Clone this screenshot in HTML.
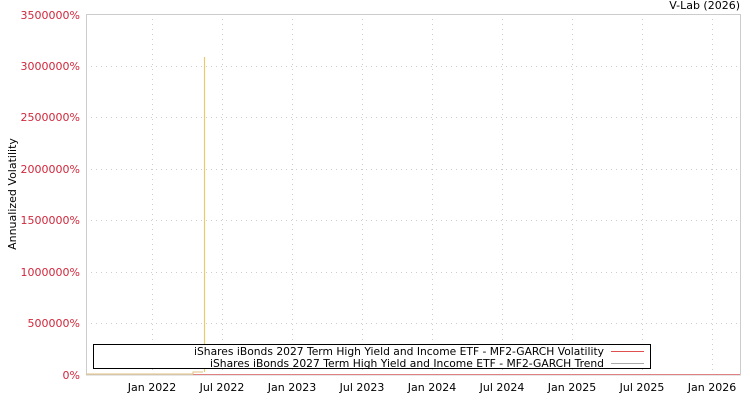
<!DOCTYPE html>
<html><head><meta charset="utf-8"><style>
html,body{margin:0;padding:0;background:#fff;}
svg{display:block;font-family:"DejaVu Sans","Liberation Sans",sans-serif;}
</style></head><body>
<svg width="750" height="400" viewBox="0 0 750 400">
<rect width="750" height="400" fill="#fff"/>
<text x="740" y="9" font-size="11" text-anchor="end" fill="#000">V-Lab (2026)</text>
<g stroke="#ccc" stroke-width="1" stroke-dasharray="1,4">
<line x1="152.5" y1="14" x2="152.5" y2="375"/>
<line x1="222.5" y1="14" x2="222.5" y2="375"/>
<line x1="292.5" y1="14" x2="292.5" y2="375"/>
<line x1="362.5" y1="14" x2="362.5" y2="375"/>
<line x1="432.5" y1="14" x2="432.5" y2="375"/>
<line x1="502.5" y1="14" x2="502.5" y2="375"/>
<line x1="572.5" y1="14" x2="572.5" y2="375"/>
<line x1="642.5" y1="14" x2="642.5" y2="375"/>
<line x1="712.5" y1="14" x2="712.5" y2="375"/>
<line x1="86" y1="66.5" x2="740" y2="66.5"/>
<line x1="86" y1="117.5" x2="740" y2="117.5"/>
<line x1="86" y1="169.5" x2="740" y2="169.5"/>
<line x1="86" y1="220.5" x2="740" y2="220.5"/>
<line x1="86" y1="272.5" x2="740" y2="272.5"/>
<line x1="86" y1="323.5" x2="740" y2="323.5"/>
</g>
<rect x="86.5" y="14.5" width="654" height="360.5" fill="none" stroke="#ccc"/>
<g font-size="11" fill="#d0283c" text-anchor="end">
<text x="80" y="19">3500000%</text>
<text x="80" y="70">3000000%</text>
<text x="80" y="121">2500000%</text>
<text x="80" y="173">2000000%</text>
<text x="80" y="224">1500000%</text>
<text x="80" y="276">1000000%</text>
<text x="80" y="327">500000%</text>
<text x="80" y="379">0%</text>
</g>
<text transform="translate(16,194) rotate(-90)" font-size="11" text-anchor="middle" fill="#000">Annualized Volatility</text>
<g font-size="11" fill="#000" text-anchor="middle">
<text x="152" y="391">Jan 2022</text>
<text x="222" y="391">Jul 2022</text>
<text x="292" y="391">Jan 2023</text>
<text x="362" y="391">Jul 2023</text>
<text x="432" y="391">Jan 2024</text>
<text x="502" y="391">Jul 2024</text>
<text x="572" y="391">Jan 2025</text>
<text x="642" y="391">Jul 2025</text>
<text x="712" y="391">Jan 2026</text>
</g>
<line x1="193" y1="374.5" x2="740" y2="374.5" stroke="#e08080" stroke-width="1"/>
<polyline points="86,374 193,374 193,372 203,372" fill="none" stroke="#e0c080" stroke-width="1"/>
<line x1="204.5" y1="57" x2="204.5" y2="372" stroke="#e8c870" stroke-width="1.2"/>
<rect x="93.5" y="344.5" width="557" height="24" fill="#fff" stroke="#000"/>
<g font-size="11" fill="#000">
<text x="194" y="355" textLength="410" lengthAdjust="spacingAndGlyphs">iShares iBonds 2027 Term High Yield and Income ETF - MF2-GARCH Volatility</text>
<text x="210" y="367" textLength="394" lengthAdjust="spacingAndGlyphs">iShares iBonds 2027 Term High Yield and Income ETF - MF2-GARCH Trend</text>
</g>
<line x1="611" y1="351.5" x2="644" y2="351.5" stroke="#e05050"/>
<line x1="611" y1="363.5" x2="644" y2="363.5" stroke="#aaa"/>
</svg>
</body></html>
